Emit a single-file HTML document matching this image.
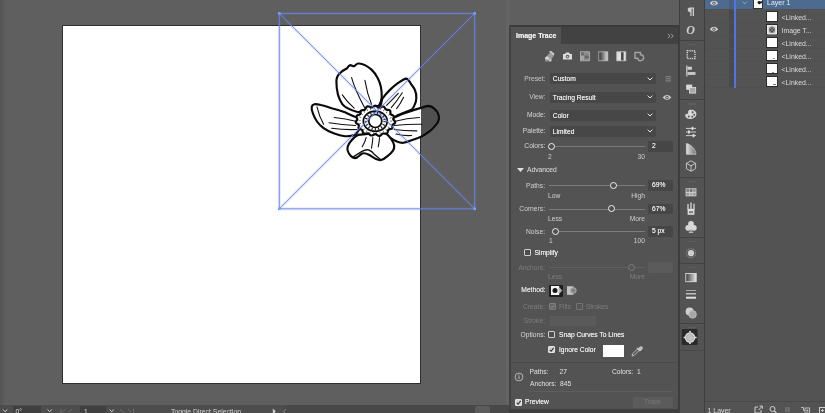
<!DOCTYPE html>
<html><head><meta charset="utf-8">
<style>
html,body{margin:0;padding:0;}
body{width:825px;height:413px;overflow:hidden;position:relative;background:#5f5f5f;font-family:"Liberation Sans",sans-serif;font-size:6.7px;color:#f0f0f0;line-height:8px;}
div,span{position:absolute;box-sizing:border-box;white-space:nowrap;}
.t{height:8px;line-height:8px;text-shadow:0 0 0.4px rgba(255,255,255,.7);}
.r{text-align:right;}
.dis{color:#7d7d7d;text-shadow:none;}
.dd{background:#474747;border-radius:1.5px;height:11px;left:550px;width:106px;}
.dd .t{left:2.8px;top:2.1px;}
.fld{background:#464646;left:648px;width:25px;height:10.5px;border-radius:1px;}
.fld .t{left:4px;top:1.2px;}
.trk{height:1px;background:#7c7c7c;}
.knob{width:7px;height:7px;border-radius:50%;border:1.2px solid #f2f2f2;background:#505050;}
.cb{width:7px;height:7px;border:1px solid #cfcfcf;border-radius:1px;background:#4d4d4d;}
svg{position:absolute;overflow:visible;}
#root{left:0;top:0;width:825px;height:413px;overflow:hidden;background:#5f5f5f;filter:blur(0.45px);}
</style></head><body><div id="root">

<!-- canvas left strip -->
<div style="left:0;top:0;width:2px;height:405px;background:#555;"></div>
<div style="left:2px;top:0;width:3px;height:405px;background:#5b5b5b;"></div>

<div style="left:505.5px;top:0;width:4px;height:405px;background:#646464;"></div>
<!-- artboard -->
<div style="left:62px;top:25px;width:359px;height:359px;background:#fff;border:1px solid #2e2e2e;"></div>

<!-- flower + bbox -->
<svg id="art" style="left:0;top:0" width="825" height="413" viewBox="0 0 825 413">
<g fill="none" stroke="#0a0a0a" stroke-width="2.15" stroke-linejoin="round" stroke-linecap="round">
<!-- top petal -->
<path fill="#fff" d="M358.2 112.2 C350 110 345 108 342.3 104.2 C338 98 336.4 92.3 336.4 81.6 C336.4 77 338.5 74 340.9 72.3 C343 70 345 69.5 347.1 68.3 C348 66.5 349 65.3 350.2 65.1 C351.5 65 353 66.5 354.2 66.2 C355.5 65 356.8 63.7 358.2 63.5 C360.5 63.3 362.8 64 364.9 65.1 C367.3 66.3 369.6 67.8 371.5 69.6 C374 72 376 74.6 377.4 77.6 C379 80.5 380.2 83.6 380.9 86.9 C381.6 90.4 381.9 94 381.7 97.6 C381.5 100.5 380.5 103.3 379 105.6 Z"/>
<!-- right-upper petal -->
<path fill="#fff" d="M382.2 98.9 C384.5 95.6 387.2 92.4 390.2 89.6 C392.7 87.2 395.4 84.9 398.2 82.9 C400.6 81.3 403.5 79 406.3 78.6 C408 79 409.8 81.8 411 84 C412.6 86 414 88 414.9 90 C416 92.5 416.6 95.3 416.3 98 C416.2 100.5 415.8 102.5 415 104 C414.2 106.2 413.2 108 412 109.5 L398.2 114.9 L394.2 117.5 L380 108 Z"/>
<!-- right petal -->
<clipPath id="cIn"><rect x="62" y="25" width="358.9" height="359"/></clipPath>
<clipPath id="cOut"><rect x="420.9" y="0" width="100" height="413"/></clipPath>
<path d="M394.2 117.5 C399 115 404 113.2 408.3 112 C412.5 110.5 417 109 420.9 107.9 C423.5 107 426 106 428.2 105.9 C430.5 106 432.6 107 434.2 108.6 C436 110 437.4 111.8 438.2 113.9 C438.9 115.6 439.1 117.4 438.9 119.2 C438.6 121.5 437.2 123.8 435.4 125.5 C433.9 127.6 432.1 129.4 430.1 130.9 C427.6 132.9 424.9 134.7 422.1 136.2 C418.7 137.9 415.1 139.1 411.5 140.2 C408.9 141.2 406.2 142.2 403.5 142.8 C401.2 143 398.9 142.4 396.8 141.5 C394.4 140.5 392.2 139.1 390.2 137.5 C388.2 135.9 386.4 134.1 384.8 132.2 Z" fill="#fff" stroke="none" clip-path="url(#cIn)"/>
<path d="M394.2 117.5 C399 115 404 113.2 408.3 112 C412.5 110.5 417 109 420.9 107.9 C423.5 107 426 106 428.2 105.9 C430.5 106 432.6 107 434.2 108.6 C436 110 437.4 111.8 438.2 113.9 C438.9 115.6 439.1 117.4 438.9 119.2 C438.6 121.5 437.2 123.8 435.4 125.5 C433.9 127.6 432.1 129.4 430.1 130.9 C427.6 132.9 424.9 134.7 422.1 136.2 C418.7 137.9 415.1 139.1 411.5 140.2 C408.9 141.2 406.2 142.2 403.5 142.8 C401.2 143 398.9 142.4 396.8 141.5 C394.4 140.5 392.2 139.1 390.2 137.5 C388.2 135.9 386.4 134.1 384.8 132.2 Z" fill="#505050" stroke="none" clip-path="url(#cOut)"/>
<path d="M394.2 117.5 C399 115 404 113.2 408.3 112 C412.5 110.5 417 109 420.9 107.9 C423.5 107 426 106 428.2 105.9 C430.5 106 432.6 107 434.2 108.6 C436 110 437.4 111.8 438.2 113.9 C438.9 115.6 439.1 117.4 438.9 119.2 C438.6 121.5 437.2 123.8 435.4 125.5 C433.9 127.6 432.1 129.4 430.1 130.9 C427.6 132.9 424.9 134.7 422.1 136.2 C418.7 137.9 415.1 139.1 411.5 140.2 C408.9 141.2 406.2 142.2 403.5 142.8 C401.2 143 398.9 142.4 396.8 141.5 C394.4 140.5 392.2 139.1 390.2 137.5 C388.2 135.9 386.4 134.1 384.8 132.2"/>
<!-- bottom petal -->
<path fill="#fff" d="M358.2 134.9 C355.7 136.3 353.4 138.1 351.6 140.2 C349.8 142.1 348.4 144.4 347.6 146.8 C347 149 347.6 151.5 348.9 153.5 C349.9 155.2 351.3 156.6 352.9 157.5 C354.2 158.2 355.7 158.3 356.9 157.5 C358.9 156.5 360.3 154.4 362.2 153.5 C364.4 152.9 366.9 153.7 368.9 154.8 C371.3 156 373.2 157.8 375.5 158.8 C377.2 159.6 379.1 160.5 380.9 160.1 C383.4 159.3 385.6 157.8 387.5 156.1 C389.5 154.6 391.4 152.8 392.8 150.8 C393.9 149.3 394.4 147.3 394.2 145.5 C393.5 141 389 136 384.8 132.2 Z"/>
<!-- left petal -->
<path fill="#fff" d="M356.9 117.5 C352.8 115.9 348.8 114 344.9 112.2 C340.6 110.5 336.1 109.3 331.6 108.2 C328.1 107 324.6 105.7 321 105 C318.8 104.5 316.5 104 314.3 104.2 C313 104.5 311.9 105.6 311.7 106.9 C311.4 109.2 312.1 111.5 313 113.6 C314 116.4 315.3 119.1 317 121.5 C318.8 124.1 321.1 126.3 323.6 128.2 C326.8 130.6 330.5 132.3 334.3 133.5 C337.7 134.7 341.3 135.7 344.9 136.2 C348.5 136.5 352.1 135.9 355.6 134.9 L362 125 Z"/>
</g>
<g fill="none" stroke="#111" stroke-width="1.1" stroke-linecap="round">
<path d="M351.6 77.6 Q355 90 364.9 108.2"/>
<path d="M364.9 80.3 Q367 93 371.5 104.2"/>
<path d="M342.3 94.9 Q347 102 354.2 108.2"/>
<path d="M386.6 105.4 L398.3 93.3"/>
<path d="M391.3 107.6 Q397 101 402.3 92.8"/>
<path d="M396.6 108.6 Q401 103 403.6 97.3"/>
<path d="M394.2 121.5 Q407 118 419.5 117.5"/>
<path d="M394.2 125.5 Q408 124 422.1 124.2"/>
<path d="M394.2 129.5 Q405 131 416.8 130.9"/>
<path d="M396 134 Q404 136 411.5 135.5"/>
<path d="M356.9 121.5 Q345 118.5 334.3 117.5"/>
<path d="M355.6 125.5 Q342 125 329 122.8"/>
<path d="M356.9 129.5 Q344 130 331.6 128.2"/>
<path d="M317 106.9 Q319 116 323.6 124.2"/>
<path d="M366.2 137.5 Q365 142 362.2 146.8"/>
<path d="M372.9 137.5 Q372.5 143 371.5 148.2"/>
<path d="M379.5 137.5 Q379.3 142 378.2 146.8"/>
<path d="M353.3 156.8 L361.5 151.6 Q366 149.2 368.8 150 Q372 151.2 374.2 154.2 L380.2 159.2" stroke-width="1.4"/>
</g>
<!-- center -->
<g>
<path d="M394.4 120.8 L394.8 121.3 L395.1 121.8 L395.2 122.3 L395.1 122.8 L394.8 123.2 L394.3 123.6 L393.8 124.0 L393.2 124.3 L392.8 124.7 L392.5 125.0 L392.3 125.5 L392.3 125.9 L392.3 126.5 L392.4 127.0 L392.4 127.6 L392.3 128.0 L392.0 128.5 L391.5 128.8 L390.9 129.0 L390.2 129.1 L389.6 129.2 L389.0 129.4 L388.6 129.6 L388.3 130.0 L388.1 130.5 L387.9 131.1 L387.8 131.7 L387.6 132.4 L387.4 132.9 L387.0 133.3 L386.4 133.6 L385.8 133.7 L385.1 133.6 L384.4 133.6 L383.8 133.5 L383.2 133.5 L382.6 133.7 L382.2 134.0 L381.7 134.4 L381.3 134.8 L380.8 135.3 L380.3 135.7 L379.7 135.9 L379.1 135.9 L378.4 135.7 L377.8 135.4 L377.1 135.0 L376.5 134.6 L376.0 134.3 L375.4 134.2 L374.8 134.2 L374.3 134.4 L373.7 134.8 L373.1 135.1 L372.4 135.4 L371.8 135.5 L371.2 135.5 L370.6 135.3 L370.1 135.0 L369.6 134.5 L369.2 134.1 L368.8 133.7 L368.3 133.4 L367.7 133.3 L367.1 133.4 L366.4 133.5 L365.7 133.7 L364.9 133.7 L364.3 133.7 L363.7 133.5 L363.3 133.1 L363.0 132.6 L362.8 132.0 L362.6 131.4 L362.5 130.8 L362.3 130.3 L362.0 129.9 L361.5 129.6 L361.0 129.4 L360.4 129.2 L359.8 129.1 L359.2 128.8 L358.8 128.5 L358.6 128.0 L358.5 127.5 L358.6 126.9 L358.7 126.4 L358.8 125.8 L358.8 125.4 L358.7 124.9 L358.4 124.6 L357.9 124.2 L357.4 123.9 L356.8 123.6 L356.3 123.2 L356.0 122.7 L355.8 122.3 L355.8 121.8 L356.1 121.3 L356.4 120.8 L356.8 120.3 L357.1 119.9 L357.3 119.5 L357.3 119.0 L357.2 118.6 L357.0 118.1 L356.8 117.6 L356.6 117.0 L356.6 116.5 L356.7 116.0 L357.1 115.6 L357.6 115.3 L358.2 115.0 L358.9 114.8 L359.5 114.6 L360.0 114.3 L360.3 114.0 L360.5 113.6 L360.5 113.1 L360.6 112.5 L360.6 111.9 L360.7 111.3 L361.0 110.8 L361.4 110.5 L361.9 110.3 L362.5 110.1 L363.2 110.1 L363.8 110.0 L364.4 109.9 L364.8 109.7 L365.2 109.3 L365.5 108.8 L365.8 108.2 L366.1 107.6 L366.5 107.0 L366.9 106.6 L367.5 106.4 L368.1 106.4 L368.8 106.5 L369.5 106.8 L370.2 107.0 L370.9 107.3 L371.5 107.4 L372.0 107.3 L372.6 107.1 L373.1 106.8 L373.6 106.4 L374.2 106.0 L374.8 105.8 L375.4 105.7 L376.0 105.9 L376.6 106.2 L377.1 106.6 L377.7 107.0 L378.2 107.4 L378.7 107.6 L379.2 107.7 L379.8 107.6 L380.5 107.4 L381.2 107.1 L381.9 106.8 L382.6 106.6 L383.2 106.6 L383.8 106.8 L384.3 107.1 L384.7 107.6 L385.0 108.2 L385.3 108.7 L385.7 109.1 L386.1 109.5 L386.6 109.7 L387.2 109.8 L387.9 109.8 L388.5 109.9 L389.2 110.0 L389.7 110.2 L390.1 110.6 L390.3 111.1 L390.4 111.7 L390.4 112.4 L390.4 113.0 L390.4 113.5 L390.5 114.0 L390.8 114.4 L391.2 114.6 L391.8 114.9 L392.4 115.1 L392.9 115.4 L393.4 115.7 L393.7 116.1 L393.9 116.6 L393.8 117.1 L393.7 117.6 L393.5 118.1 L393.3 118.6 L393.2 119.1 L393.3 119.5 L393.6 119.9 L394.0 120.3 Z" fill="#fff" stroke="#0a0a0a" stroke-width="2.2" stroke-linejoin="round"/>
<ellipse cx="375.3" cy="120.8" rx="15.7" ry="12.5" fill="none" stroke="#333" stroke-width="2" stroke-dasharray="0.6 2.8"/>
<ellipse cx="375.3" cy="121.2" rx="12" ry="10.1" fill="#f1f2f7" stroke="#0a0a0a" stroke-width="1.7"/>
<ellipse cx="375.3" cy="121.2" rx="9.4" ry="8.2" fill="none" stroke="#111" stroke-width="2.6" stroke-dasharray="1 2.3"/>
<circle cx="375.3" cy="121.0" r="6.5" fill="#fff" stroke="#0a0a0a" stroke-width="1.7"/>
</g>
<!-- bbox -->
<g stroke="#6478e4" stroke-width="3" fill="none" opacity="0.17">
<rect x="279.3" y="13.4" width="195.4" height="195.4"/>
<path d="M279.3 13.4 L474.7 208.8 M474.7 13.4 L279.3 208.8"/>
</g>
<g stroke="#6a86e8" stroke-width="0.95" fill="none" opacity="0.92">
<rect x="279.3" y="13.4" width="195.4" height="195.4"/>
<path d="M279.3 13.4 L474.7 208.8 M474.7 13.4 L279.3 208.8"/>
</g>
<g fill="#7aa0f0"><rect x="278" y="12.1" width="2.6" height="2.6"/><rect x="473.4" y="12.1" width="2.6" height="2.6"/><rect x="278" y="207.5" width="2.6" height="2.6"/><rect x="473.4" y="207.5" width="2.6" height="2.6"/></g>
</svg>

<!-- status bar -->
<div id="status" style="left:0;top:405px;width:705px;height:8px;background:#484848;">
<div style="left:0;top:0;width:285px;height:8px;background:#4d4d4d;"></div>
<div style="left:13px;top:0.5px;width:28px;height:8px;background:#3f3f3f;"></div>
<div style="left:80px;top:0.5px;width:26px;height:8px;background:#3f3f3f;"></div>
<div class="t" style="left:15.5px;top:2.8px;font-size:6.8px;text-shadow:none;color:#ddd">0°</div>
<div class="t" style="left:84px;top:2.8px;font-size:6.8px;text-shadow:none;color:#ddd">1</div>
<div class="t" style="left:171px;top:2.8px;font-size:6.85px;text-shadow:none;color:#d2d2d2">Toggle Direct Selection</div>
<svg style="left:0;top:0" width="300" height="8" viewBox="0 0 300 8">
<path d="M3 4.5 l2.2 2.2 l2.2 -2.2 M47.5 4.5 l2.2 2.2 l2.2 -2.2 M109.5 4.5 l2.2 2.2 l2.2 -2.2" fill="none" stroke="#d0d0d0" stroke-width="1"/>
<path d="M61 4 v4 M65.5 4 l-3 3 M72 4 l-3 3" stroke="#6c6c6c" stroke-width="1" fill="none"/>
<path d="M120 4 l3 3 M128 4 l3 3 M133.5 4 v4" stroke="#6c6c6c" stroke-width="1" fill="none"/>
<path d="M272.8 3.6 v6 l3 -3z" fill="#d0d0d0"/>
<path d="M286 4 l-2.2 2.6 l2.2 2.6" stroke="#8a8a8a" stroke-width="0.9" fill="none"/>
</svg>
<div style="left:474.5px;top:0.5px;width:15.5px;height:9px;background:#5c5c5c;border-radius:2.5px;"></div>
</div>

<div style="left:509px;top:408.5px;width:170px;height:5px;background:#3f3f3f;"></div>
<!-- IMAGE TRACE PANEL -->
<div id="panel" style="left:509px;top:25px;width:170px;height:383.5px;background:#535353;">
<div style="left:0;top:0;width:170px;height:2px;background:#3a3a3a;"></div>
<div style="left:0;top:0;width:1.5px;height:384px;background:#424242;"></div>
<div style="left:169px;top:0;width:1px;height:384px;background:#3c3c3c;"></div>
<div style="left:1.5px;top:2px;width:167.5px;height:16.5px;background:#424242;"></div>
<div style="left:1.5px;top:2px;width:50px;height:16.5px;background:#535353;"></div>
<div class="t" style="left:7px;top:6.8px;font-weight:bold;font-size:7px;">Image Trace</div>
<svg style="left:158px;top:7.5px" width="7" height="6" viewBox="0 0 7 6"><path d="M0.8 0.8 L3 3 L0.8 5.2 M4 0.8 L6.2 3 L4 5.2" fill="none" stroke="#a8a8a8" stroke-width="0.9"/></svg>

<!-- icon row -->
<svg style="left:34px;top:25px" width="104" height="13" viewBox="0 0 104 13">
 <g>
  <path d="M2.5 7.5 l4.5-5 l4 3 l-4 5.5 z" fill="#9a9a9a"/>
  <path d="M6 1.8 l2-1 l3.5 3 l-1 1.6 z" fill="#c9c9c9"/>
  <circle cx="4" cy="8.6" r="2" fill="#d8d8d8"/><circle cx="7" cy="10" r="1.8" fill="#bdbdbd"/><circle cx="3.4" cy="10.6" r="1.4" fill="#8d8d8d"/>
 </g>
 <g>
  <path d="M20 4 h2 l0.9-1.4 h3.2 l0.9 1.4 h2 v5.6 h-9 z" fill="#dcdcdc"/>
  <circle cx="24.5" cy="6.6" r="1.8" fill="#5a5a5a"/><circle cx="24.5" cy="6.6" r="0.9" fill="#cfcfcf"/>
 </g>
 <g>
  <rect x="37.5" y="1.8" width="9" height="9" fill="#8c8c8c" stroke="#b5b5b5" stroke-width="0.8"/>
  <rect x="38" y="2.3" width="3" height="3" fill="#6d6d6d"/><rect x="41.6" y="5.5" width="4.4" height="3" fill="#6b6b6b"/><rect x="38" y="5.8" width="3" height="4.4" fill="#a5a5a5"/>
 </g>
 <defs><linearGradient id="g1" x1="0" x2="1" y1="0" y2="0"><stop offset="0" stop-color="#2c2c2c"/><stop offset="1" stop-color="#dedede"/></linearGradient></defs>
 <rect x="55.8" y="1.8" width="9" height="9" fill="url(#g1)" stroke="#b9b9b9" stroke-width="0.8"/>
 <g><rect x="73.8" y="1.8" width="9" height="9" fill="#e0e0e0" stroke="#c4c4c4" stroke-width="0.8"/><rect x="78" y="2.2" width="2.6" height="8.2" fill="#4a4a4a"/></g>
 <path d="M92 2.5 h5.5 v2.2 a3 3 0 1 1 -2.8 3.6 h-2.7 z" fill="none" stroke="#a4a4a4" stroke-width="1.4"/>
</svg>

<!-- Preset -->
<div class="t r" style="left:0;width:36.5px;top:49.5px;color:#c8c8c8;text-shadow:none">Preset:</div>
<div class="dd" style="left:41px;top:48px;"><div class="t">Custom</div><svg style="left:96.5px;top:3.5px" width="6" height="4" viewBox="0 0 6 4"><path d="M0.6 0.6 L3 3 L5.4 0.6" fill="none" stroke="#e8e8e8" stroke-width="1"/></svg></div>
<svg style="left:156px;top:50.5px" width="7" height="6" viewBox="0 0 7 6"><path d="M0.5 0.7h5.5M0.5 2.8h5.5M0.5 4.9h5.5" stroke="#8a8a8a" stroke-width="1"/></svg>
<!-- View -->
<div class="t r" style="left:0;width:36.5px;top:68px;color:#c8c8c8;text-shadow:none">View:</div>
<div class="dd" style="left:41px;top:66.5px;"><div class="t">Tracing Result</div><svg style="left:96.5px;top:3.5px" width="6" height="4" viewBox="0 0 6 4"><path d="M0.6 0.6 L3 3 L5.4 0.6" fill="none" stroke="#e8e8e8" stroke-width="1"/></svg></div>
<svg style="left:153px;top:69px" width="10" height="7" viewBox="0 0 10 7"><path d="M0.6 3.5 Q5 -1.3 9.4 3.5 Q5 8.3 0.6 3.5z" fill="#cfcfcf"/><circle cx="5" cy="3.5" r="1.7" fill="#555"/><circle cx="5" cy="3.5" r="0.8" fill="#ddd"/></svg>
<!-- Mode -->
<div class="t r" style="left:0;width:36.5px;top:86px;color:#d8d8d8;text-shadow:none">Mode:</div>
<div class="dd" style="left:41px;top:84.5px;"><div class="t">Color</div><svg style="left:96.5px;top:3.5px" width="6" height="4" viewBox="0 0 6 4"><path d="M0.6 0.6 L3 3 L5.4 0.6" fill="none" stroke="#e8e8e8" stroke-width="1"/></svg></div>
<!-- Palette -->
<div class="t r" style="left:0;width:36.5px;top:102px;color:#d8d8d8;text-shadow:none">Palette:</div>
<div class="dd" style="left:41px;top:100.5px;"><div class="t">Limited</div><svg style="left:96.5px;top:3.5px" width="6" height="4" viewBox="0 0 6 4"><path d="M0.6 0.6 L3 3 L5.4 0.6" fill="none" stroke="#e8e8e8" stroke-width="1"/></svg></div>
<!-- Colors -->
<div class="t r" style="left:0;width:36.5px;top:117.3px;color:#d8d8d8;text-shadow:none">Colors:</div>
<div class="trk" style="left:46px;top:120.8px;width:90px;"></div>
<div class="knob" style="left:39px;top:117.8px;"></div>
<div class="fld" style="left:139px;top:116px;"><div class="t">2</div></div>
<div class="t" style="left:39px;top:127.5px;color:#d0d0d0;text-shadow:none">2</div>
<div class="t r" style="left:100px;width:36px;top:127.5px;color:#d0d0d0;text-shadow:none">30</div>
<!-- Advanced -->
<svg style="left:8px;top:142.5px" width="7" height="4" viewBox="0 0 7 4"><path d="M0 0h7l-3.5 4z" fill="#e0e0e0"/></svg>
<div class="t" style="left:18px;top:140.5px;color:#e0e0e0;text-shadow:none">Advanced</div>
<!-- Paths -->
<div class="t r" style="left:0;width:36px;top:156.5px;color:#d0d0d0;text-shadow:none">Paths:</div>
<div class="trk" style="left:40px;top:160px;width:96px;"></div>
<div class="knob" style="left:100.5px;top:156.8px;"></div>
<div class="fld" style="left:139px;top:155.2px;"><div class="t">69%</div></div>
<div class="t" style="left:39px;top:166.5px;color:#d0d0d0;text-shadow:none">Low</div>
<div class="t r" style="left:100px;width:36px;top:166.5px;color:#d0d0d0;text-shadow:none">High</div>
<!-- Corners -->
<div class="t r" style="left:0;width:36px;top:180px;color:#d0d0d0;text-shadow:none">Corners:</div>
<div class="trk" style="left:40px;top:183.5px;width:96px;"></div>
<div class="knob" style="left:98.8px;top:180.3px;"></div>
<div class="fld" style="left:139px;top:178.7px;"><div class="t">67%</div></div>
<div class="t" style="left:39px;top:189.7px;color:#d0d0d0;text-shadow:none">Less</div>
<div class="t r" style="left:100px;width:36px;top:189.7px;color:#d0d0d0;text-shadow:none">More</div>
<!-- Noise -->
<div class="t r" style="left:0;width:36px;top:202.8px;color:#d0d0d0;text-shadow:none">Noise:</div>
<div class="trk" style="left:50px;top:206.3px;width:86px;"></div>
<div class="knob" style="left:42.7px;top:203.1px;"></div>
<div class="fld" style="left:139px;top:201.3px;"><div class="t">5 px</div></div>
<div class="t" style="left:40px;top:212.3px;color:#d0d0d0;text-shadow:none">1</div>
<div class="t r" style="left:100px;width:36px;top:212.3px;color:#d0d0d0;text-shadow:none">100</div>
<!-- Simplify -->
<div class="cb" style="left:15px;top:224px;"></div>
<div class="t" style="left:25.5px;top:223.5px;">Simplify</div>
<!-- Anchors disabled -->
<div class="t r dis" style="left:0;width:36px;top:238.5px;">Anchors:</div>
<div class="trk" style="left:40px;top:242px;width:96px;background:#606060"></div>
<div class="knob" style="left:119px;top:238.8px;border-color:#7a7a7a;background:#565656"></div>
<div class="fld" style="left:139px;top:237px;background:#5b5b5b"></div>
<div class="t dis" style="left:39px;top:248px;">Less</div>
<div class="t r dis" style="left:100px;width:36px;top:248px;">More</div>
<!-- Method -->
<div class="t r" style="left:0;width:36.5px;top:261.2px;color:#e6e6e6">Method:</div>
<div style="left:40.3px;top:259.5px;width:13.4px;height:12.4px;background:#1e1e1e;border-radius:1px;"></div>
<svg style="left:41.8px;top:261.2px" width="12" height="9.5" viewBox="0 0 12 9.5"><rect x="0" y="0" width="8.2" height="9" fill="#f4f4f4"/><circle cx="4" cy="4.5" r="2.5" fill="#151515"/><path d="M6.2 2 h2.3 l2.3 2.5 l-2.3 2.5 h-2.3 a2.7 2.7 0 0 0 0 -5z" fill="#a8a8a8" stroke="#eee" stroke-width="0.6"/></svg>
<svg style="left:57.5px;top:261.2px" width="12" height="9.5" viewBox="0 0 12 9.5"><rect x="0" y="0.2" width="6.3" height="8.6" fill="#c4c4c4"/><circle cx="6.3" cy="4.5" r="3" fill="#8f8f8f" stroke="#b5b5b5" stroke-width="0.6"/><circle cx="6.6" cy="4.5" r="1.3" fill="#7a7a7a"/></svg>
<!-- Create -->
<div class="t r dis" style="left:0;width:36px;top:277.5px;">Create:</div>
<div class="cb" style="left:39.5px;top:277.8px;border-color:#7e7e7e;background:#666"></div>
<svg style="left:40.5px;top:278.8px" width="5" height="5" viewBox="0 0 5 5"><path d="M0.8 2.6 L2 3.9 L4.3 0.9" fill="none" stroke="#8e8e8e" stroke-width="0.9"/></svg>
<div class="t dis" style="left:50px;top:277.5px;">Fills</div>
<div class="cb" style="left:67px;top:277.8px;border-color:#747474;background:#555"></div>
<div class="t dis" style="left:76.7px;top:277.5px;">Strokes</div>
<!-- Stroke -->
<div class="t r dis" style="left:0;width:36px;top:292px;">Stroke:</div>
<div style="left:40.5px;top:291px;width:46px;height:9.5px;background:#5a5a5a;border-radius:1px;"></div>
<!-- Options -->
<div class="t r" style="left:0;width:36.5px;top:306px;color:#d8d8d8;text-shadow:none">Options:</div>
<div class="cb" style="left:39.3px;top:306px;"></div>
<div class="t" style="left:50px;top:305.8px;">Snap Curves To Lines</div>
<!-- Ignore Color -->
<div class="cb" style="left:39.3px;top:321.3px;background:#d2d2d2;border-color:#e4e4e4"></div>
<svg style="left:40.3px;top:322.3px" width="5.4" height="5.4" viewBox="0 0 5 5"><path d="M0.8 2.6 L2 3.9 L4.3 0.8" fill="none" stroke="#333" stroke-width="1"/></svg>
<div class="t" style="left:50px;top:321.3px;">Ignore Color</div>
<div style="left:94.2px;top:319.5px;width:21px;height:12px;background:#fdfdfd;"></div>
<svg style="left:121.5px;top:319.5px" width="12" height="12" viewBox="0 0 12 12"><path d="M1 11 L1.6 8.8 L6.6 3.8 L8.2 5.4 L3.2 10.4 Z" fill="none" stroke="#c8c8c8" stroke-width="0.9"/><path d="M6 3 l3 3 M7.2 4.2 l2-2 a1.2 1.2 0 0 1 1.7 1.7 l-2 2" fill="#bbb" stroke="#c8c8c8" stroke-width="1.1"/></svg>
<!-- separator -->
<div style="left:1.5px;top:337.3px;width:167px;height:1px;background:#494949;"></div>
<!-- info -->
<svg style="left:5px;top:347px" width="10" height="10" viewBox="0 0 10 10"><circle cx="5" cy="5" r="3.9" fill="none" stroke="#bdbdbd" stroke-width="0.9"/><path d="M5 4.3v2.6" stroke="#c8c8c8" stroke-width="1"/><circle cx="5" cy="3" r="0.6" fill="#c8c8c8"/></svg>
<div class="t" style="left:20.5px;top:342.5px;color:#e2e2e2;text-shadow:none">Paths:</div>
<div class="t" style="left:50.5px;top:342.5px;color:#e2e2e2;text-shadow:none">27</div>
<div class="t" style="left:103px;top:342.5px;color:#e2e2e2;text-shadow:none">Colors:</div>
<div class="t" style="left:128px;top:342.5px;color:#e2e2e2;text-shadow:none">1</div>
<div class="t" style="left:21px;top:354.8px;color:#e2e2e2;text-shadow:none">Anchors:</div>
<div class="t" style="left:51px;top:354.8px;color:#e2e2e2;text-shadow:none">845</div>
<div style="left:20px;top:366px;width:144px;height:1px;background:#5e5e5e;"></div>
<!-- Preview -->
<div class="cb" style="left:6px;top:373.5px;background:#d2d2d2;border-color:#e4e4e4"></div>
<svg style="left:7px;top:374.5px" width="5.4" height="5.4" viewBox="0 0 5 5"><path d="M0.8 2.6 L2 3.9 L4.3 0.8" fill="none" stroke="#333" stroke-width="1"/></svg>
<div class="t" style="left:16px;top:373.3px;">Preview</div>
<div style="left:123.5px;top:371.5px;width:40px;height:11px;background:#5b5b5b;border-radius:1.5px;"></div>
<div class="t dis" style="left:123.5px;width:40px;text-align:center;top:373px;color:#787878">Trace</div>
</div>

<!-- dock strip -->
<div id="dock" style="left:679px;top:0;width:26px;height:413px;background:#535353;">
<div style="left:0;top:0;width:1px;height:413px;background:#3e3e3e;"></div>
<div style="left:25px;top:0;width:1.2px;height:413px;background:#3e3e3e;"></div>
<!-- separators + grips -->
<div style="left:1px;top:39.5px;width:24px;height:1px;background:#434343;"></div><div style="left:8px;top:43.5px;width:9px;height:1.4px;background:#5e5e5e;"></div>
<div style="left:1px;top:99.3px;width:24px;height:1px;background:#434343;"></div><div style="left:8px;top:103.3px;width:9px;height:1.4px;background:#5e5e5e;"></div>
<div style="left:1px;top:177px;width:24px;height:1px;background:#434343;"></div><div style="left:8px;top:181px;width:9px;height:1.4px;background:#5e5e5e;"></div>
<div style="left:1px;top:237px;width:24px;height:1px;background:#434343;"></div><div style="left:8px;top:241px;width:9px;height:1.4px;background:#5e5e5e;"></div>
<div style="left:1px;top:263px;width:24px;height:1px;background:#434343;"></div><div style="left:8px;top:267px;width:9px;height:1.4px;background:#5e5e5e;"></div>
<div style="left:1px;top:323px;width:24px;height:1px;background:#434343;"></div><div style="left:8px;top:327px;width:9px;height:1.4px;background:#5e5e5e;"></div>
<div style="left:1px;top:349.5px;width:24px;height:1px;background:#484848;"></div>
<svg style="left:0;top:0" width="26" height="413" viewBox="679 0 26 413">
<defs>
<linearGradient id="gd1" x1="0" x2="1"><stop offset="0" stop-color="#3a3a3a"/><stop offset="1" stop-color="#e8e8e8"/></linearGradient>
<linearGradient id="gd2" x1="0" x2="1"><stop offset="0" stop-color="#e0e0e0"/><stop offset="1" stop-color="#707070"/></linearGradient>
</defs>
<!-- pilcrow -->
<path d="M689.2 7.5 h4.8 v8.6 h-1.3 v-7.4 h-1.1 v7.4 h-1.3 v-3.8 a2.5 2.5 0 0 1 -1.1 -4.8z" fill="#cdcdcd"/>
<!-- O italic -->
<text x="686.2" y="33.6" font-family="Liberation Serif,serif" font-style="italic" font-weight="bold" font-size="12" fill="#cfcfcf">O</text>
<!-- dotted square -->
<rect x="687.2" y="50.7" width="7.8" height="7.8" fill="none" stroke="#d8d8d8" stroke-width="1.4" stroke-dasharray="1.2 1"/>
<!-- align -->
<path d="M686.8 65.5 v11" stroke="#d0d0d0" stroke-width="1.2"/><rect x="687.5" y="66.7" width="4.4" height="3" fill="#d0d0d0"/><rect x="687.5" y="72" width="8" height="3" fill="#c4c4c4"/>
<!-- pathfinder -->
<rect x="686.2" y="84.6" width="6" height="5.2" fill="#dadada"/><rect x="689.4" y="87.5" width="6.3" height="5.6" fill="#a8a8a8" stroke="#dcdcdc" stroke-width="0.8"/>
<!-- palette -->
<path d="M691 109.8 c3.2 0 5.4 1.6 5.4 4.2 c0 2.6 -2.6 5 -6 5 c-3 0 -5.2 -1.6 -5.2 -3.8 c0 -1.2 1.4 -1.2 2.4 -1.4 c1 -0.3 0.2 -1.6 0.6 -2.6 c0.4 -1 1.6 -1.4 2.8 -1.4z" fill="#d6d6d6"/>
<circle cx="692.6" cy="112.3" r="1" fill="#555"/><circle cx="694.2" cy="114.8" r="1" fill="#555"/><circle cx="692.2" cy="116.8" r="1" fill="#555"/><circle cx="688.8" cy="116.4" r="1" fill="#555"/>
<!-- sliders -->
<path d="M686 128.4 h10 M686 132 h10 M686 135.6 h10" stroke="#cfcfcf" stroke-width="1"/>
<rect x="691.6" y="126.8" width="1.8" height="3.2" fill="#ddd"/><rect x="688" y="130.4" width="1.8" height="3.2" fill="#ddd"/><rect x="692.6" y="134" width="1.8" height="3.2" fill="#ddd"/>
<!-- gradient sail -->
<path d="M686.4 143.5 v10.8 h9.6 c-0.6 -5.4 -4.6 -9.6 -9.6 -10.8z" fill="url(#gd2)" stroke="#d4d4d4" stroke-width="0.7"/>
<!-- cube -->
<path d="M691 160.8 l4.6 2.5 v5.4 l-4.6 2.5 l-4.6 -2.5 v-5.4 z M686.4 163.3 l4.6 2.5 l4.6 -2.5 M691 165.8 v5.4" fill="none" stroke="#cfcfcf" stroke-width="0.9"/>
<!-- swatches grid -->
<rect x="685.6" y="188.3" width="10.8" height="8" fill="#cfcfcf"/>
<rect x="686.4" y="189.2" width="2.6" height="2.6" fill="#777"/><rect x="689.8" y="189.2" width="2.6" height="2.6" fill="#666"/><rect x="693.2" y="189.2" width="2.4" height="2.6" fill="#8a8a8a"/>
<rect x="686.4" y="192.9" width="2.6" height="2.6" fill="#999"/><rect x="689.8" y="192.9" width="2.6" height="2.6" fill="#aaa"/><rect x="693.2" y="192.9" width="2.4" height="2.6" fill="#999"/>
<!-- brushes -->
<path d="M688 209 v-4.5 M691 209 v-6 M694 209 v-4.8" stroke="#d8d8d8" stroke-width="1.3" stroke-linecap="round"/>
<path d="M687.6 208.8 h6.8 v6 h-6.8z" fill="#dcdcdc"/><rect x="689" y="211.2" width="4" height="2" fill="#7a7a7a"/>
<!-- club -->
<circle cx="691" cy="224" r="2.9" fill="#d8d8d8"/><circle cx="688.2" cy="227.8" r="2.9" fill="#d8d8d8"/><circle cx="693.8" cy="227.8" r="2.9" fill="#d8d8d8"/>
<path d="M691 227 v4.5 M688.8 232.2 h4.4" stroke="#d8d8d8" stroke-width="1.1"/>
<!-- sun -->
<circle cx="691" cy="253.2" r="4.6" fill="none" stroke="#8a8a8a" stroke-width="1.2" stroke-dasharray="0.9 0.9"/>
<circle cx="691" cy="253.2" r="3.1" fill="#cfcfcf"/>
<!-- gradient rect -->
<rect x="685.8" y="273.5" width="10.4" height="8.2" fill="url(#gd1)" stroke="#dadada" stroke-width="0.9"/>
<!-- stroke lines -->
<path d="M686 290.5 h10" stroke="#bdbdbd" stroke-width="0.8"/><path d="M686 293.8 h10" stroke="#d2d2d2" stroke-width="1.3"/><path d="M686 297.7 h10" stroke="#dedede" stroke-width="2"/>
<!-- transparency -->
<circle cx="689.6" cy="311.4" r="4" fill="#cfcfcf"/><circle cx="692.6" cy="314.4" r="3.8" fill="#a6a6a6" stroke="#c6c6c6" stroke-width="0.7"/>
<!-- image trace selected -->
<rect x="681.8" y="329" width="15.8" height="16" rx="1" fill="#2a2a2a"/>
<circle cx="690" cy="337.5" r="5.2" fill="#dedede"/>
<circle cx="690" cy="337.5" r="3.6" fill="#c2c2c2" stroke="#9a9a9a" stroke-width="0.6"/>
<path d="M690 331 v1.6 M690 342.4 v1.6 M683.6 337.5 h1.4 M695 337.5 h1.6" stroke="#e8e8e8" stroke-width="1.6"/>
</svg>
</div>

<!-- layers panel -->
<div id="layers" style="left:705px;top:0;width:120px;height:413px;background:#535353;">
<div style="left:0;top:0;width:120px;height:9px;background:#4c6b8f;"></div>
<div style="left:24px;top:0;width:5px;height:88px;background:#4a4a4c;"></div>
<div style="left:24px;top:0;width:5px;height:9px;background:#48607f;"></div>
<div style="left:0;top:9px;width:120px;height:1px;background:#505050;"></div>
<div style="left:0;top:22px;width:120px;height:1px;background:#505050;"></div>
<div style="left:0;top:35px;width:120px;height:1px;background:#505050;"></div>
<div style="left:0;top:48px;width:120px;height:1px;background:#505050;"></div>
<div style="left:0;top:61px;width:120px;height:1px;background:#505050;"></div>
<div style="left:0;top:74px;width:120px;height:1px;background:#505050;"></div>
<div style="left:0;top:87px;width:120px;height:1px;background:#505050;"></div>
<div style="left:29px;top:0;width:2.4px;height:88px;background:#4f74e6;"></div>
<svg style="left:4px;top:0.2px" width="10" height="6.4" viewBox="0 0 10 7"><path d="M0.4 3.5 Q5 -1.6 9.6 3.5 Q5 8.6 0.4 3.5z" fill="#d8d8d8"/><circle cx="5" cy="3.5" r="1.8" fill="#555"/><circle cx="5" cy="3.5" r="0.8" fill="#ddd"/></svg>
<svg style="left:4px;top:26px" width="10" height="6.4" viewBox="0 0 10 7"><path d="M0.4 3.5 Q5 -1.6 9.6 3.5 Q5 8.6 0.4 3.5z" fill="#d8d8d8"/><circle cx="5" cy="3.5" r="1.8" fill="#555"/><circle cx="5" cy="3.5" r="0.8" fill="#ddd"/></svg>
<svg style="left:37px;top:1.3px" width="5.4" height="3.9" viewBox="0 0 7 5"><path d="M0.7 0.8 L3.5 3.6 L6.3 0.8" fill="none" stroke="#aebfd6" stroke-width="1"/></svg>
<div style="left:47.5px;top:-2px;width:10.8px;height:10.8px;background:#fbfbfb;border:0.6px solid #333"></div>
<svg style="left:52px;top:0" width="6" height="6" viewBox="0 0 6 6"><path d="M0.5 2 q1.5 -1.5 3 -0.5 q1.5 -0.6 2 0.6 q-0.6 1.4 -2 1.4 q-1 1.2 -1.8 0.4 q-1.2 -0.4 -1.2 -1.9z" fill="#111"/></svg>
<div class="t" style="left:62px;top:-1.5px;color:#e4ecf8;font-size:7px;text-shadow:none">Layer 1</div>
<div style="left:61.2px;top:11px;width:11.6px;height:11.2px;background:#fcfcfc;border:0.8px solid #2c2c2c"></div>
<div class="t" style="left:76.5px;top:13.9px;color:#dcdcdc;text-shadow:none;font-size:6.9px">&lt;Linked...</div>
<div style="left:61.2px;top:24px;width:11.6px;height:11.2px;background:#fcfcfc;border:0.8px solid #2c2c2c"></div>
<div class="t" style="left:76.5px;top:26.9px;color:#dcdcdc;text-shadow:none;font-size:6.9px">Image T...</div>
<div style="left:61.2px;top:37px;width:11.6px;height:11.2px;background:#fcfcfc;border:0.8px solid #2c2c2c"></div>
<div class="t" style="left:76.5px;top:39.9px;color:#dcdcdc;text-shadow:none;font-size:6.9px">&lt;Linked...</div>
<div style="left:61.2px;top:50px;width:11.6px;height:11.2px;background:#fcfcfc;border:0.8px solid #2c2c2c"></div>
<div class="t" style="left:76.5px;top:52.9px;color:#dcdcdc;text-shadow:none;font-size:6.9px">&lt;Linked...</div>
<div style="left:61.2px;top:63px;width:11.6px;height:11.2px;background:#fcfcfc;border:0.8px solid #2c2c2c"></div>
<div class="t" style="left:76.5px;top:65.9px;color:#dcdcdc;text-shadow:none;font-size:6.9px">&lt;Linked...</div>
<div style="left:61.2px;top:76px;width:11.6px;height:11.2px;background:#fcfcfc;border:0.8px solid #2c2c2c"></div>
<div class="t" style="left:76.5px;top:78.9px;color:#dcdcdc;text-shadow:none;font-size:6.9px">&lt;Linked...</div>
<svg style="left:62px;top:24.8px" width="10" height="9.5" viewBox="0 0 10 10"><rect width="10" height="10" fill="#e2e2e2"/><circle cx="5" cy="5" r="3.4" fill="#777"/><circle cx="5" cy="5.2" r="1.8" fill="#222"/><path d="M2 2 l6 6 M8 2 l-6 6" stroke="#aaa" stroke-width="0.8"/></svg>
<div style="left:68px;top:58px;width:2px;height:1px;background:#999"></div><div style="left:66.5px;top:71.5px;width:2.5px;height:1px;background:#888"></div><div style="left:67.5px;top:84px;width:3px;height:1.2px;background:#777"></div>
<div style="left:0;top:401px;width:120px;height:1px;background:#484848;"></div>
<div class="t" style="left:2.6px;top:406.6px;color:#d8d8d8;text-shadow:none;font-size:6.9px">1 Layer</div>
<svg style="left:48px;top:404.3px" width="72" height="10" viewBox="753 403 72 10">
<path d="M755 406 h3 M755 406 v6 h6 v-3" fill="none" stroke="#d0d0d0" stroke-width="1"/><path d="M758.5 409 l3.5 -3.5 M759.5 405 h2.8 v2.8" fill="none" stroke="#d0d0d0" stroke-width="1"/>
<circle cx="772.5" cy="408" r="2.5" fill="none" stroke="#d0d0d0" stroke-width="1"/><path d="M774.4 410 l2.4 2.6" stroke="#d0d0d0" stroke-width="1.2"/>
<rect x="785" y="406" width="5" height="5" fill="#6a6a6a"/>
<path d="M801 406.5 h2.5 v3 h1.5 M803.5 406.5" fill="none" stroke="#c4c4c4" stroke-width="0.9"/><rect x="805" y="407" width="4.6" height="5" fill="none" stroke="#c4c4c4" stroke-width="0.9"/><path d="M807.3 408.3 v2.6 M806 409.6 h2.6" stroke="#c4c4c4" stroke-width="0.8"/>
<rect x="819.5" y="406.5" width="6" height="6" fill="none" stroke="#d0d0d0" stroke-width="1"/><path d="M822.5 408 v3 M821 409.5 h3" stroke="#d0d0d0" stroke-width="0.9"/>
</svg>
</div>

</div></body></html>
